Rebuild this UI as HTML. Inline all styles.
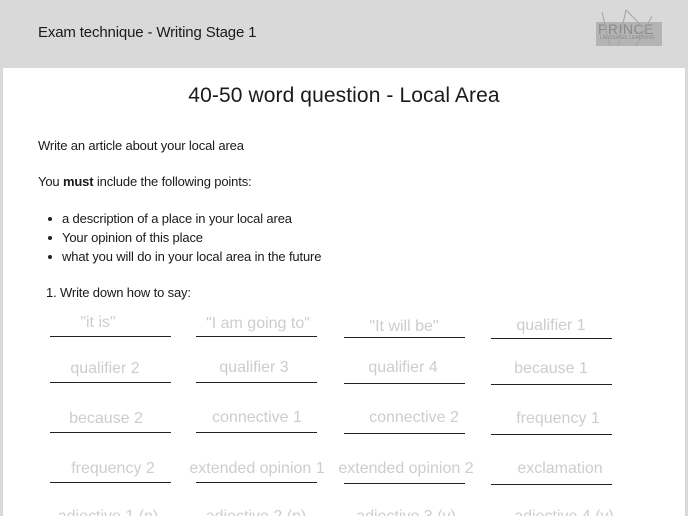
<!DOCTYPE html>
<html><head><meta charset="utf-8"><style>
html,body{margin:0;width:688px;height:516px;overflow:hidden}
body{background:#d9d9d9;font-family:"Liberation Sans",sans-serif;position:relative}
.pg{position:absolute;left:3px;top:68px;width:682px;height:460px;background:#fff}
.a{position:absolute;white-space:nowrap;color:#1a1a1a}
.t{font-size:13px;letter-spacing:-0.15px}
.l{position:absolute;white-space:nowrap;color:#cdcdcd;font-size:16px;letter-spacing:0px;width:140px;text-align:center}
.ln{position:absolute;height:1px;width:121px;background:#222}
.d{position:absolute;width:4px;height:4px;border-radius:50%;background:#222}
</style></head><body>
<div class="a" style="left:38px;top:24px;font-size:15px;letter-spacing:-0.15px">Exam technique - Writing Stage 1</div>
<div style="position:absolute;left:596px;top:22px;width:66px;height:24px;background:#b4b4b4"></div>
<div class="a" style="left:598px;top:21px;font-size:14px;color:#8a8a8a;letter-spacing:0.5px">PRINCE</div>
<div class="a" style="left:600px;top:35px;font-size:5px;color:#8a8a8a">LANGUAGE LEARNING</div>
<svg style="position:absolute;left:596px;top:8px" width="66" height="42"><path d="M6 4 L14 38 M30 2 L22 38 M30 2 L48 20 M56 8 L40 38" stroke="#a5a5a5" stroke-width="1" fill="none"/></svg>
<div class="pg"></div>
<div class="a" style="left:0;width:688px;text-align:center;top:84px;font-size:21px;letter-spacing:0.1px">40-50 word question - Local Area</div>
<div class="a t" style="left:38px;top:138px">Write an article about your local area</div>
<div class="a t" style="left:38px;top:174px">You <b>must</b> include the following points:</div>
<div class="d" style="left:48px;top:217px"></div><div class="a t" style="left:62px;top:211px">a description of a place in your local area</div>
<div class="d" style="left:48px;top:236px"></div><div class="a t" style="left:62px;top:230px">Your opinion of this place</div>
<div class="d" style="left:48px;top:255px"></div><div class="a t" style="left:62px;top:249px">what you will do in your local area in the future</div>
<div class="a t" style="left:46px;top:285px">1. Write down how to say:</div>

<div class="l" style="left:28px;top:314px">"it is"</div><div class="ln" style="left:50px;top:336px"></div>
<div class="l" style="left:188px;top:315px">"I am going to"</div><div class="ln" style="left:196px;top:336px"></div>
<div class="l" style="left:334px;top:318px">"It will be"</div><div class="ln" style="left:344px;top:337px"></div>
<div class="l" style="left:481px;top:317px">qualifier 1</div><div class="ln" style="left:491px;top:338px"></div>

<div class="l" style="left:35px;top:360px">qualifier 2</div><div class="ln" style="left:50px;top:382px"></div>
<div class="l" style="left:184px;top:359px">qualifier 3</div><div class="ln" style="left:196px;top:382px"></div>
<div class="l" style="left:333px;top:359px">qualifier 4</div><div class="ln" style="left:344px;top:383px"></div>
<div class="l" style="left:481px;top:360px">because 1</div><div class="ln" style="left:491px;top:384px"></div>

<div class="l" style="left:36px;top:410px">because 2</div><div class="ln" style="left:50px;top:432px"></div>
<div class="l" style="left:187px;top:409px">connective 1</div><div class="ln" style="left:196px;top:432px"></div>
<div class="l" style="left:344px;top:409px">connective 2</div><div class="ln" style="left:344px;top:433px"></div>
<div class="l" style="left:488px;top:410px">frequency 1</div><div class="ln" style="left:491px;top:434px"></div>

<div class="l" style="left:43px;top:460px">frequency 2</div><div class="ln" style="left:50px;top:482px"></div>
<div class="l" style="left:187px;top:460px">extended opinion 1</div><div class="ln" style="left:196px;top:482px"></div>
<div class="l" style="left:336px;top:460px">extended opinion 2</div><div class="ln" style="left:344px;top:483px"></div>
<div class="l" style="left:490px;top:460px">exclamation</div><div class="ln" style="left:491px;top:484px"></div>

<div class="l" style="left:38px;top:508px">adjective 1 (n)</div>
<div class="l" style="left:186px;top:508px">adjective 2 (n)</div>
<div class="l" style="left:336px;top:508px">adjective 3 (v)</div>
<div class="l" style="left:494px;top:508px">adjective 4 (v)</div>
</body></html>
